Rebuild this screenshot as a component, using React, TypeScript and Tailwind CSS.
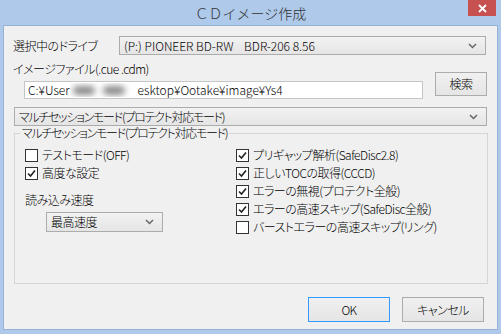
import React from 'react';

const font = "font-['Noto_Sans_CJK_JP','Noto_Sans',sans-serif] [font-feature-settings:'palt'] font-light tracking-[-0.5px]";

function Chevron() {
  return (
    <svg width="9" height="6" viewBox="0 0 9 6" className="shrink-0">
      <polyline points="1,1 4.5,4.5 8,1" fill="none" stroke="#666" strokeWidth="1.5" />
    </svg>
  );
}

function Combo({ text, className, textClass }: { text: string; className: string; textClass?: string }) {
  return (
    <div
      className={`flex items-center justify-between border border-[#acacac] bg-gradient-to-b from-[#f2f2f2] to-[#e5e5e5] pl-[4px] pr-[8px] ${className}`}
    >
      <span className={`whitespace-pre text-[12px] leading-[14px] text-black ${textClass ?? ''}`}>{text}</span>
      <Chevron />
    </div>
  );
}

function Check({ label, checked }: { label: string; checked: boolean }) {
  return (
    <div className="flex h-[18px] items-center">
      <div className="flex h-[13px] w-[13px] items-center justify-center border border-[#333] bg-white">
        {checked && (
          <svg width="11" height="11" viewBox="0 0 11 11">
            <path d="M2 5.5 L4.5 8 L9 2.5" fill="none" stroke="#222" strokeWidth="1.6" />
          </svg>
        )}
      </div>
      <span className="ml-[4px] whitespace-pre text-[12px] leading-[14px] text-black">{label}</span>
    </div>
  );
}

function Button({ label, primary }: { label: string; primary?: boolean }) {
  return (
    <button
      className={`flex h-[25px] w-[82px] items-center justify-center border bg-gradient-to-b from-[#f0f0f0] to-[#e5e5e5] text-[12px] leading-[14px] text-black ${
        primary ? 'border-[#3399ff]' : 'border-[#acacac]'
      }`}
    >
      {label}
    </button>
  );
}

export default function App() {
  return (
    <div className={`flex h-[334px] w-[501px] flex-col bg-[#aec9ea] ${font}`}>
      <div className="relative flex h-[25px] shrink-0 items-center justify-center">
        <span className="text-[14px] leading-[16px] tracking-normal text-[#333] [font-feature-settings:normal]">ＣＤイメージ作成</span>
        <div className="absolute right-[5px] top-0 flex h-[16px] w-[28px] items-center justify-center bg-[#c75050]">
          <svg width="9" height="9" viewBox="0 0 9 9">
            <path d="M1 1 L8 8 M8 1 L1 8" stroke="#fff" strokeWidth="1.8" />
          </svg>
        </div>
      </div>

      <div className="ml-[3px] flex h-[305px] w-[495px] flex-col border border-[#95b2d6] bg-[#f0f0f0]">
        {/* drive */}
        <div className="mt-[10px] flex items-center pl-[9px]">
          <span className="w-[106px] text-[12px] leading-[14px] text-black">選択中のドライブ</span>
          <Combo text="(P:) PIONEER BD-RW    BDR-206 8.56" className="h-[19px] w-[367px]" textClass="tracking-normal" />
        </div>

        {/* image file */}
        <div className="mt-[7px] flex items-end">
          <div className="flex flex-col pl-[9px]">
            <span className="h-[14px] text-[12px] leading-[14px] text-black">イメージファイル(.cue .cdm)</span>
            <div className="ml-[11px] mt-[5px] flex h-[18px] w-[399px] items-center border border-[#c5c5c5] bg-white pl-[3px]">
              <span className="whitespace-pre text-[12px] leading-[14px] tracking-normal text-black">C:¥User</span>
              <span className="flex h-[14px] w-[68px] shrink-0 items-center gap-[8px] overflow-hidden px-[3px]">
                <span className="h-[9px] w-[22px] rounded-full bg-[#8a8a8a] blur-[3px]" />
                <span className="h-[9px] w-[22px] rounded-full bg-[#8a8a8a] blur-[3px]" />
              </span>
              <span className="whitespace-pre text-[12px] leading-[14px] tracking-normal text-black">esktop¥Ootake¥image¥Ys4</span>
            </div>
          </div>
          <button className="mb-[3px] ml-[12px] flex h-[24px] w-[52px] items-center justify-center border border-[#acacac] bg-gradient-to-b from-[#f0f0f0] to-[#e5e5e5] text-[12px] leading-[14px] text-black">
            検索
          </button>
        </div>

        {/* mode */}
        <div className="ml-[10px] mt-[8px]">
          <Combo text="マルチセッションモード(プロテクト対応モード)" className="h-[19px] w-[473px]" textClass="tracking-[-1.3px]" />
        </div>

        {/* group */}
        <fieldset className="ml-[10px] h-[158px] w-[474px] border border-[#d5d5d5]">
          <legend className="ml-[5px] px-[2px] text-[12px] leading-[14px] tracking-[-1.3px] text-black">
            マルチセッションモード(プロテクト対応モード)
          </legend>
          <div className="flex pt-[6px]">
            <div className="flex w-[221px] flex-col pl-[10px]">
              <Check label="テストモード(OFF)" checked={false} />
              <Check label="高度な設定" checked />
              <span className="mt-[11px] text-[12px] leading-[14px] text-black">読み込み速度</span>
              <div className="ml-[21px] mt-[5px]">
                <Combo text="最高速度" className="h-[20px] w-[117px]" />
              </div>
            </div>
            <div className="flex flex-col">
              <Check label="プリギャップ解析(SafeDisc2.8)" checked />
              <Check label="正しいTOCの取得(CCCD)" checked />
              <Check label="エラーの無視(プロテクト全般)" checked />
              <Check label="エラーの高速スキップ(SafeDisc全般)" checked />
              <Check label="バーストエラーの高速スキップ(リング)" checked={false} />
            </div>
          </div>
        </fieldset>

        {/* buttons */}
        <div className="mt-[13px] flex justify-end gap-[12px] pr-[13px]">
          <Button label="OK" primary />
          <Button label="キャンセル" />
        </div>
      </div>
    </div>
  );
}
